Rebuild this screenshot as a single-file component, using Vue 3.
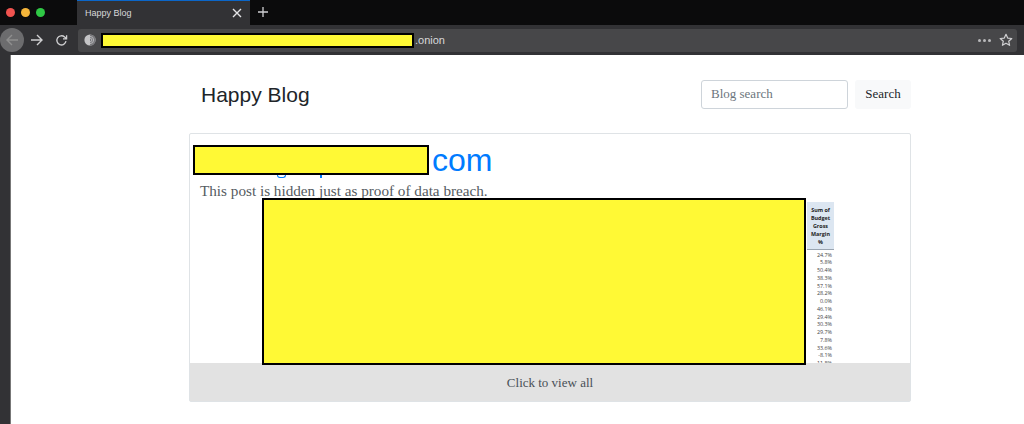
<script setup>
const margins = ['24.7%', '5.8%', '50.4%', '38.3%', '57.1%', '28.2%', '0.0%', '46.1%', '29.4%', '30.3%', '29.7%', '7.8%', '33.6%', '-8.1%', '11.8%'];
const headLines = ['Sum of', 'Budget', 'Gross', 'Margin', '%'];
</script>

<template>
  <div class="browser">
    <div class="tabbar">
      <div class="lights">
        <span class="light red"></span>
        <span class="light yellow"></span>
        <span class="light green"></span>
      </div>
      <div class="tab">
        <span class="tab-title">Happy Blog</span>
        <svg class="tab-close" width="10" height="10" viewBox="0 0 10 10">
          <path d="M1 1L9 9M9 1L1 9" stroke="#e4e4e6" stroke-width="1.4" fill="none" />
        </svg>
      </div>
      <svg class="tab-new" width="12" height="12" viewBox="0 0 12 12">
        <path d="M6 1V11M1 6H11" stroke="#d0d0d2" stroke-width="1.3" fill="none" />
      </svg>
    </div>

    <div class="toolbar">
      <span class="back">
        <svg width="14" height="14" viewBox="0 0 14 14">
          <path d="M13 7H2M7 2L2 7L7 12" stroke="#8f8f8f" stroke-width="1.4" fill="none" />
        </svg>
      </span>
      <svg class="forward" width="14" height="14" viewBox="0 0 14 14">
        <path d="M1 7H12M7 2L12 7L7 12" stroke="#cfcfd1" stroke-width="1.4" fill="none" />
      </svg>
      <svg class="reload" width="13" height="13" viewBox="0 0 13 13">
        <path d="M11 7.2A4.6 4.6 0 1 1 9.6 3L11.4 4.6M11.6 1.2V4.8H8" stroke="#cfcfd1" stroke-width="1.3" fill="none" />
      </svg>
      <div class="urlbar">
        <svg class="onion" width="12" height="12" viewBox="0 0 12 12">
          <circle cx="6" cy="6" r="5.6" fill="#c4c4c6" />
          <path d="M6 .4A5.6 5.6 0 0 1 6 11.6Z" fill="#77777a" />
          <path d="M6 2.4A3.6 3.6 0 0 1 6 9.6M6 4.2A1.8 1.8 0 0 1 6 7.8" stroke="#c4c4c6" stroke-width=".8" fill="none" />
        </svg>
        <span class="url-mask"></span>
        <span class="url-end">.onion</span>
        <span class="url-more">
          <i></i><i></i><i></i>
        </span>
        <svg class="url-star" width="14" height="14" viewBox="0 0 14 14">
          <path d="M7 1.3L8.7 5.1L12.8 5.5L9.7 8.2L10.6 12.3L7 10.2L3.4 12.3L4.3 8.2L1.2 5.5L5.3 5.1Z" stroke="#d0d0d2" stroke-width="1.2" fill="none" stroke-linejoin="round" />
        </svg>
      </div>
    </div>

    <div class="viewport">
      <div class="side"></div>
      <div class="page">
        <header class="head">
          <div class="brand">Happy Blog</div>
          <form class="search" @submit.prevent>
            <input class="search-input" type="text" placeholder="Blog search" />
            <button class="search-btn">Search</button>
          </form>
        </header>

        <section class="card">
          <div class="card-body">
            <h2 class="post-title">
              <span class="title-mask">
                <i class="desc g"></i>
                <i class="desc p"></i>
              </span>
              <span class="title-end">com</span>
            </h2>
            <p class="post-text">This post is hidden just as proof of data breach.</p>
            <div class="sheet">
              <div class="sheet-mask"></div>
              <div class="sheet-col">
                <div class="col-head">
                  <div v-for="l in headLines" :key="l">{{ l }}</div>
                </div>
                <div v-for="m in margins" :key="m" class="col-cell">{{ m }}</div>
              </div>
            </div>
          </div>
          <div class="view-all">Click to view all</div>
        </section>
      </div>
    </div>
  </div>
</template>

<style scoped>
.browser {
  width: 1024px;
  height: 424px;
  overflow: hidden;
  display: flex;
  flex-direction: column;
  font-family: "Liberation Sans", Arial, sans-serif;
}
.tabbar {
  height: 25px;
  background: #0b0b0c;
  display: flex;
  align-items: stretch;
}
.lights {
  width: 77px;
  display: flex;
  align-items: center;
  gap: 6px;
  padding-left: 6px;
  padding-bottom: 1px;
  box-sizing: border-box;
}
.light {
  width: 9px;
  height: 9px;
  border-radius: 50%;
}
.red { background: #f0534f; }
.yellow { background: #f5b53a; }
.green { background: #2fc845; }
.tab {
  width: 173px;
  box-sizing: border-box;
  background: #323235;
  border-top: 1px solid #0b66c8;
  display: flex;
  align-items: center;
  justify-content: space-between;
  padding: 0 8px 0 8px;
}
.tab-title {
  color: #d8d8da;
  font-size: 9px;
}
.tab-new {
  margin: 6px 0 0 7px;
}
.toolbar {
  height: 30px;
  background: #323235;
  display: flex;
  align-items: center;
}
.back {
  width: 24px;
  height: 24px;
  border-radius: 50%;
  background: #6c6c6e;
  display: flex;
  align-items: center;
  justify-content: center;
}
.forward {
  margin-left: 6px;
}
.reload {
  margin-left: 11px;
}
.urlbar {
  margin-left: 10px;
  width: 939px;
  height: 23px;
  background: #474749;
  border-radius: 3px;
  display: flex;
  align-items: center;
  padding-left: 6px;
  box-sizing: border-box;
}
.url-mask {
  margin-left: 5px;
  width: 313px;
  height: 15px;
  box-sizing: border-box;
  background: #fff935;
  border: 2px solid #000;
}
.url-end {
  margin-left: 1px;
  color: #d8d8da;
  font-size: 11px;
}
.url-more {
  margin-left: auto;
  display: flex;
  gap: 2px;
}
.url-more i {
  width: 3px;
  height: 3px;
  border-radius: 50%;
  background: #b9b9bb;
}
.url-star {
  margin: 0 4px 0 8px;
}
.viewport {
  flex: 1;
  display: flex;
  background: #fff;
  min-height: 0;
}
.side {
  width: 11px;
  background: #323235;
  border-right: 1px solid #777;
  box-sizing: border-box;
}
.page {
  width: 722px;
  margin-left: 178px;
}
.head {
  height: 78px;
  display: flex;
  align-items: center;
  justify-content: space-between;
  padding-left: 12px;
  padding-top: 2px;
  box-sizing: border-box;
}
.brand {
  color: #212529;
  font-size: 21px;
}
.search {
  display: flex;
  gap: 7px;
  margin-bottom: 2px;
}
.search-input {
  width: 147px;
  height: 29px;
  box-sizing: border-box;
  border: 1px solid #ced4da;
  border-radius: 3px;
  padding: 0 9px;
  font-family: "Liberation Serif", Georgia, serif;
  font-size: 13px;
  outline: none;
}
.search-input::placeholder {
  color: #6c757d;
}
.search-btn {
  width: 56px;
  height: 29px;
  border: none;
  border-radius: 3px;
  background: #f8f9fa;
  color: #212529;
  font-family: "Liberation Serif", Georgia, serif;
  font-size: 13px;
  padding: 0;
}
.card {
  height: 269px;
  box-sizing: border-box;
  border: 1px solid #dfe3e6;
  border-radius: 2px;
  display: flex;
  flex-direction: column;
}
.card-body {
  height: 229px;
  padding: 11px 0 0 3px;
  box-sizing: border-box;
}
.post-title {
  margin: 0;
  height: 30px;
  display: flex;
  align-items: center;
  font-weight: 400;
}
.title-mask {
  position: relative;
  width: 236px;
  height: 30px;
  box-sizing: border-box;
  background: #fff935;
  border: 2px solid #000;
}
.desc {
  position: absolute;
  top: 28px;
  height: 3px;
  border: 1.5px solid #007bff;
  border-top: none;
  box-sizing: border-box;
}
.desc.g {
  left: 82px;
  width: 9px;
  border-radius: 0 0 5px 5px;
}
.desc.p {
  left: 125px;
  width: 0;
  border-width: 0 0 0 2px;
}
.title-end {
  margin-left: 3px;
  color: #007bff;
  font-size: 32px;
  line-height: 30px;
}
.post-text {
  margin: 7px 0 0 7px;
  color: #555b61;
  font-family: "Liberation Serif", Georgia, serif;
  font-size: 15.2px;
  line-height: 18px;
}
.sheet {
  display: flex;
  margin: -2px 0 0 69px;
  align-items: flex-start;
  position: relative;
  z-index: 1;
}
.sheet-mask {
  width: 544px;
  height: 167px;
  box-sizing: border-box;
  background: #fff935;
  border: 2px solid #000;
  flex: none;
}
.sheet-col {
  width: 27px;
  height: 161px;
  overflow: hidden;
  margin: 4px 0 0 1px;
  font-family: "Open Sans", "Liberation Sans", sans-serif;
  font-size: 5.4px;
  line-height: 7.77px;
  color: #444;
  flex: none;
}
.col-head {
  background: #dce6f1;
  height: 48px;
  margin-bottom: 1.5px;
  box-sizing: border-box;
  padding-top: 4px;
  text-align: center;
  font-weight: 700;
  line-height: 8px;
  color: #222;
  border-bottom: 1px solid #9aa5b1;
}
.col-cell {
  text-align: right;
  height: 7.77px;
  padding-right: 2px;
}
.view-all {
  height: 39px;
  background: #e2e2e2;
  color: #495057;
  font-family: "Liberation Serif", Georgia, serif;
  font-size: 13px;
  padding-top: 1px;
  box-sizing: border-box;
  display: flex;
  align-items: center;
  justify-content: center;
}
</style>
